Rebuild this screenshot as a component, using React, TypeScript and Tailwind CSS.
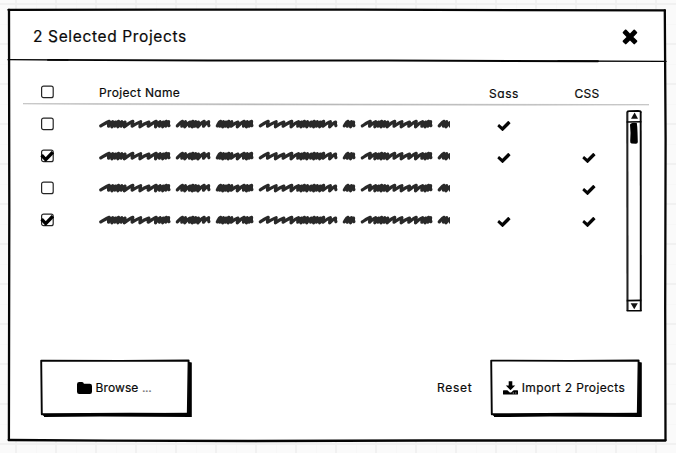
import React from "react";

const INK = "#050505";

/* Each scribbled word: its extent, then the relative widths of its pen swings. */
const words: { from: number; to: number; swings: number[] }[] = [
  { from: 0, to: 72, swings: [7.2, 3, 2.6, 2.8, 2.8, 3, 7, 7, 7.4, 6.6, 3.4, 3, 2.8, 2.8] },
  { from: 76.5, to: 112, swings: [5, 3, 5, 2.8, 2.8, 3, 6, 5.6] },
  { from: 116.5, to: 155, swings: [3, 2.8, 2.8, 2.8, 3, 6.4, 6.4, 3, 2.8, 2.8] },
  { from: 159.5, to: 239, swings: [7.2, 7.6, 7.4, 7.6, 6.4, 3, 2.8, 2.8, 3.8, 2.8, 2.8, 3, 3.2, 6.4, 6] },
  { from: 243.5, to: 257, swings: [2.8, 2.8, 2.8] },
  { from: 261.5, to: 334, swings: [7.2, 5, 3, 2.8, 2.8, 3, 6.6, 6.8, 7.2, 6.4, 6, 3, 2.8, 2.8] },
  { from: 338.5, to: 356, swings: [5, 3, 5, 3] },
];

function swingPath({ from, to, swings }: (typeof words)[number]) {
  const total = swings.reduce((sum, w) => sum + w, 0);
  const scale = (to - from - 3.6) / total;
  let x = from + 1.8;
  let d = `M${x} 6.9`;
  swings.forEach((w, i) => {
    const step = w * scale;
    const last = i === swings.length - 1;
    const top = 2.4 + (i % 3) * 0.35;
    const bottom = last ? 6.6 : 7.2 + (i % 2) * 0.6;
    const peak = last ? x + step - 0.6 : x + step + 0.4;
    d += ` C${x + step * 0.4} 5 ${peak - 2} ${top + 0.6} ${peak} ${top}`;
    x += step;
    d += ` Q${peak - 0.6} 5 ${x - 0.3} ${bottom}`;
  });
  return d;
}

function Scribble() {
  return (
    <svg className="block h-[10px] w-[351px] overflow-hidden" viewBox="0 0 351 10" fill="none">
      {words.map((word) => (
        <path
          key={word.from}
          d={swingPath(word)}
          stroke="#292929"
          strokeWidth="3.2"
          strokeLinecap="round"
          strokeLinejoin="round"
        />
      ))}
    </svg>
  );
}

function Tick() {
  return (
    <svg className="block h-3 w-[14px]" viewBox="0 0 14 12">
      <path
        d="M2.4 4.2 L5.3 6.7 L11 1.1 Q11.4 .8 11.8 1.2 L13.4 2.9 Q13.7 3.2 13.3 3.6 L6.1 10.8 Q5.5 11.3 5 10.8 L.5 6.6 Q.2 6.3 .5 5.9 L1.8 4.3 Q2.1 4 2.4 4.2Z"
        fill={INK}
      />
    </svg>
  );
}

function Checkbox({ checked = false }: { checked?: boolean }) {
  return (
    <svg className="block h-[14px] w-[14px]" viewBox="0 0 14 14" fill="none">
      <rect x="1.6" y="1.1" width="11.6" height="11.6" rx="2" stroke="#252525" strokeWidth="1.2" />
      {checked && <path d="M1.6 6.2 L5.7 10.6 L12.8 3.2" stroke="#000" strokeWidth="3.4" />}
    </svg>
  );
}

function Cross() {
  return (
    <svg className="block h-4 w-4" viewBox="0 0 16 16">
      <path
        d="M3.2.6Q3.8.2 4.4.7L8 4.4 11.6.7Q12.2.2 12.8.7L15 2.9Q15.6 3.5 15 4.2L11.4 7.9 15.1 11.6Q15.7 12.3 15 12.9L12.9 15.1Q12.2 15.7 11.6 15.1L8 11.5 4.4 15.1Q3.7 15.7 3.1 15.1L.9 12.9Q.3 12.3.9 11.6L4.5 7.9.9 4.2Q.3 3.6.9 2.9Z"
        fill="#000"
      />
    </svg>
  );
}

function FolderIcon() {
  return (
    <svg className="block h-3 w-[15px]" viewBox="0 0 15 12">
      <path
        d="M2.2 0H5Q6.6 0 6.9 1.8H12.8Q15 1.8 15 4V9.8Q15 12 12.8 12H2.2Q0 12 0 9.8V2.2Q0 0 2.2 0Z"
        fill="#000"
      />
    </svg>
  );
}

function DownloadIcon() {
  return (
    <svg className="block h-[14px] w-[15px]" viewBox="0 0 15 14">
      <path d="M5.7 .2H9.3V4.4H12.2L7.5 9.2 2.8 4.4H5.7Z" fill="#000" />
      <path
        d="M.6 9.2H4.4L6.3 11Q7.5 12 8.7 11L10.6 9.2H14.4Q15 9.2 15 9.9V13Q15 13.6 14.4 13.6H.6Q0 13.6 0 13V9.9Q0 9.2.6 9.2Z"
        fill="#000"
      />
      <path d="M9.8 12h1M12.3 12h1" stroke="#fff" strokeWidth=".8" />
    </svg>
  );
}

function SketchButton({ children }: { children: React.ReactNode }) {
  return (
    <button className="relative flex h-[58px] w-[152px] items-center justify-center pr-[4px]">
      <svg className="absolute inset-0 h-[58px] w-[152px]" viewBox="0 0 152 58">
        <path d="M4 54H148V2.8L151.8 3.4V58L60 57.6 4 58Z" fill="#000" />
        <path d="M1.2 1.6L80 1.9 148.6 1.5 147.8 55 90 54.8 1.8 55.2Z" fill="#fff" stroke={INK} strokeWidth="1.9" strokeLinejoin="round" />
        <path d="M3 56L75 55.2 148 54.6" stroke="#000" strokeWidth="1.6" fill="none" />
      </svg>
      <span className="relative flex items-center">{children}</span>
    </button>
  );
}

function Scrollbar() {
  return (
    <svg className="block h-[202px] w-4" viewBox="0 0 16 202" fill="none">
      <path d="M1.3 2L1.5 201" stroke="#222" strokeWidth="2.1" />
      <path d="M14.7 2L14.8 201" stroke="#080808" strokeWidth="1.9" />
      <path d="M1 2Q1.6 1 4 1.1L12 .9Q15 .9 15 2.5M.6 12L15.4 11.7M.7 190.6L15.3 190.4M.7 200.8H15.6" stroke={INK} strokeWidth="1.6" />
      <path d="M5 8.8L8.6 2.6 12 8.8Z" fill="#111" />
      <path d="M4.6 193.2L11.8 193.3 8.3 199.2Z" fill="#111" />
      <path d="M5 13.4Q7 12.4 10.8 13.1 11.3 16 11.5 22L11.8 32Q11.8 33.8 10 33.8L5.5 33.6Q4 33.4 4.2 31Q5 24 4 14.5Z" fill="#000" />
    </svg>
  );
}

const rows = [
  { id: 1, checked: false, sass: true, css: false },
  { id: 2, checked: true, sass: true, css: true },
  { id: 3, checked: false, sass: false, css: true },
  { id: 4, checked: true, sass: true, css: true },
];

export default function App() {
  return (
    <div className="h-[453px] w-[676px] overflow-hidden bg-[#fafafa] bg-[linear-gradient(to_right,#f1f1f1_2px,transparent_2px),linear-gradient(to_bottom,#f1f1f1_2px,transparent_2px),linear-gradient(to_right,#f7f7f7_1px,transparent_1px),linear-gradient(to_bottom,#f7f7f7_1px,transparent_1px)] bg-[size:40px_40px] bg-[position:15px_3px,15px_3px,36px_24px,36px_24px] pt-[9px] pl-2 font-['Inter',sans-serif] text-[12px] text-[#0a0a0a] [-webkit-text-stroke:0.2px] [font-feature-settings:'cv11']">
      <div className="relative flex h-[432px] w-[658px] flex-col bg-white">
        <svg className="pointer-events-none absolute inset-0 h-[432px] w-[658px] overflow-visible" viewBox="0 0 658 432" fill="none" stroke={INK} strokeLinecap="round">
          <path d="M.4 .8L150 .7 350 .7 657 1.4" strokeWidth="2.2" />
          <path d="M1 .8L1.3 200 .9 431" strokeWidth="2.3" />
          <path d="M656.8 1.4L657.6 130 657.2 300 657.5 431" strokeWidth="2.3" />
          <path d="M.7 431L100 431.6 240 432 420 431.5 657.5 431.5" strokeWidth="2.3" />
          <path d="M0 50.7L60 51" strokeWidth="1.3" />
          <path d="M40 50.9L200 51.5 380 51.5 590 52.3" strokeWidth="1.9" />
          <path d="M550 52L658 52.4" strokeWidth="1.3" />
        </svg>

        <header className="flex h-[52px] items-center justify-between pr-7 pl-[25px] pt-[3px]">
          <h1 className="text-[15.5px] leading-none tracking-[0.64px]">2 Selected Projects</h1>
          <Cross />
        </header>

        <main className="flex h-[251px] flex-col pt-[22px]">
          <div className="flex h-[20px] shrink-0 items-center pl-8">
            <div className="w-[59px] pb-[2px]"><Checkbox /></div>
            <div className="w-[365px] tracking-[0.33px]">Project Name</div>
            <div className="w-20 pt-px text-center tracking-[0.6px]">Sass</div>
            <div className="ml-[3px] w-20 pt-px text-center tracking-[0.3px]">CSS</div>
          </div>
          <svg className="ml-[15px] h-[3px] w-[626px] shrink-0" viewBox="0 0 626 3" fill="none">
            <path d="M0 .4L80 .5 340 1 626 1.6 626 2 500 2.2 300 2.1 100 1.6 0 1Z" fill="#bababa" stroke="#bababa" strokeWidth=".5" />
          </svg>
          <div className="flex">
            <div className="w-[618px] pt-[11px] pl-8">
              {rows.map((row) => (
                <div key={row.id} className="flex h-8 items-start">
                  <div className="w-[59px]"><Checkbox checked={row.checked} /></div>
                  <div className="w-[398px] pt-[2px]"><Scribble /></div>
                  <div className="w-[85px] pt-[3px]">{row.sass && <Tick />}</div>
                  <div className="pt-[3px]">{row.css && <Tick />}</div>
                </div>
              ))}
            </div>
            <div className="pt-[4px]"><Scrollbar /></div>
          </div>
        </main>

        <footer className="mt-[47px] flex items-center pl-8">
          <SketchButton>
            <FolderIcon />
            <span className="ml-1 tracking-[0.1px]">Browse <span className="tracking-[-0.3px] text-[#777]">...</span></span>
          </SketchButton>
          <button className="ml-[245px] w-[38px] text-left tracking-[0.7px]">Reset</button>
          <div className="ml-[15px]">
            <SketchButton>
              <DownloadIcon />
              <span className="ml-1 whitespace-nowrap tracking-[0.38px]">Import 2 Projects</span>
            </SketchButton>
          </div>
        </footer>
      </div>
    </div>
  );
}
